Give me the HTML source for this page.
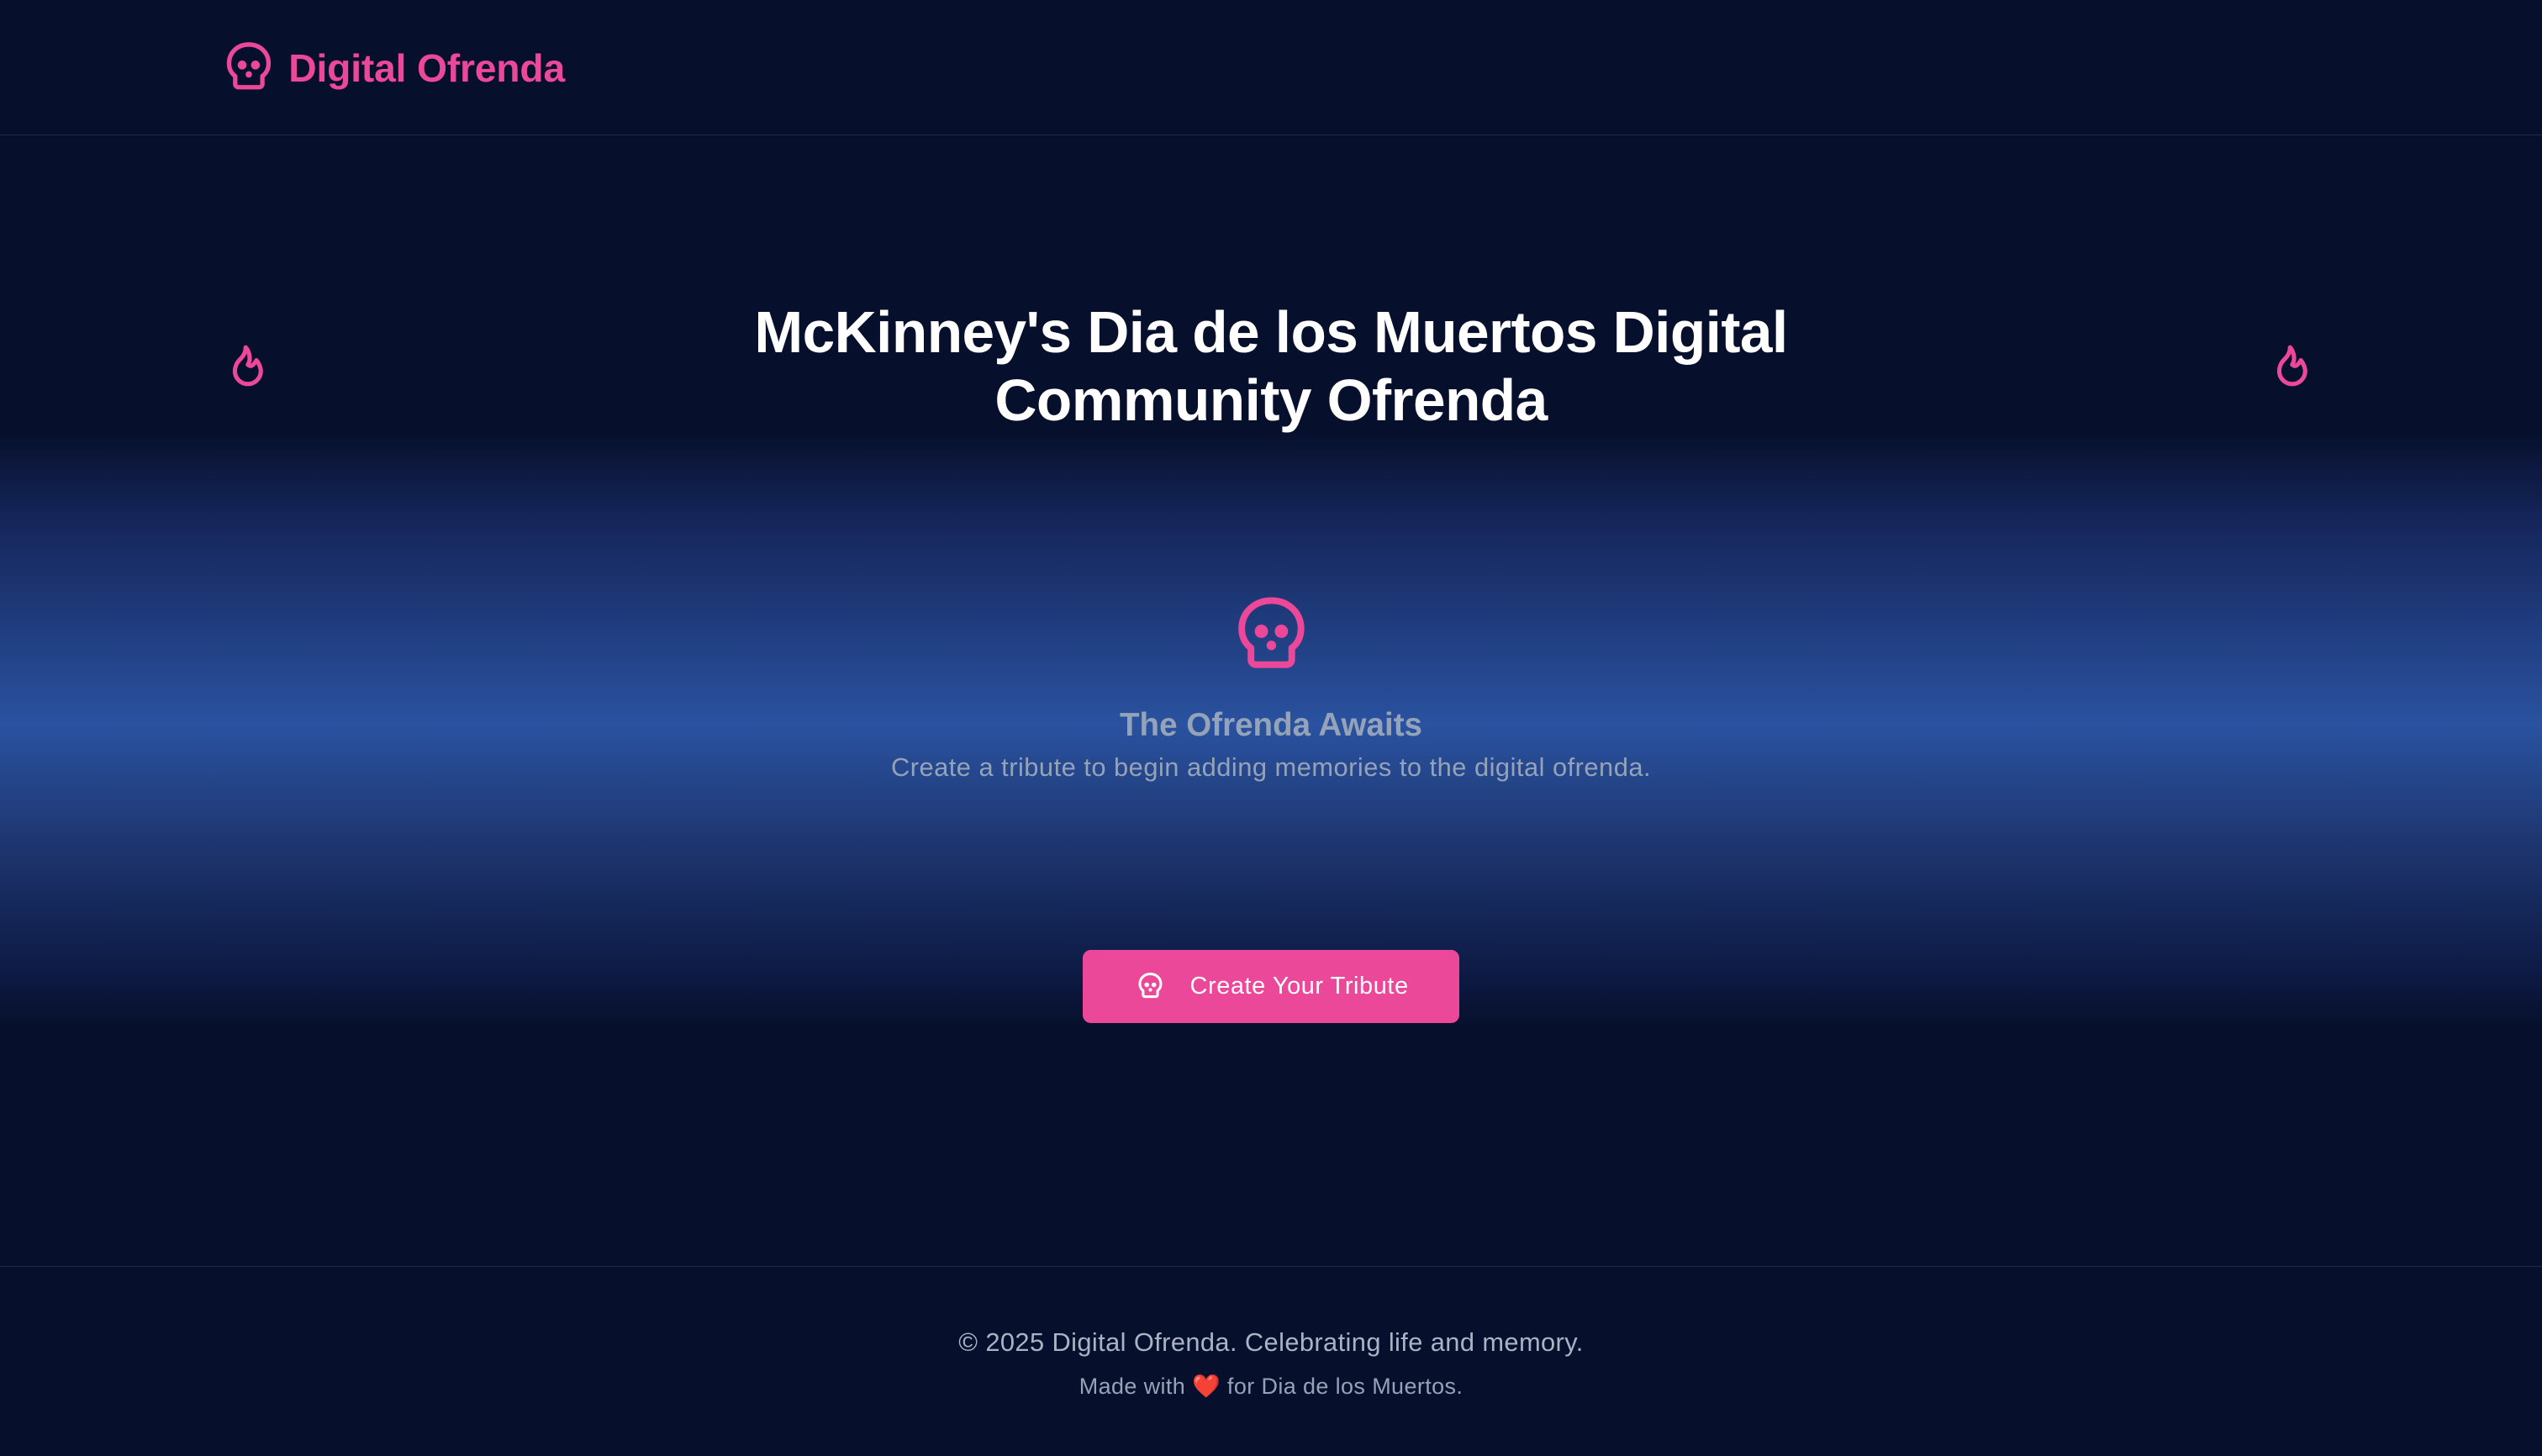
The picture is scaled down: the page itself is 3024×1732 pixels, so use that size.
<!DOCTYPE html>
<html><head><meta charset="utf-8"><style>
html,body{margin:0;padding:0;background:#060f2b;overflow:hidden}
#w{width:1568px;height:898px;zoom:1.92857;position:relative;font-family:"Liberation Sans",sans-serif;
background:linear-gradient(to bottom,#060f2b 0,#060f2b 265px,#15255a 320px,#2a52a0 447px,#1e3670 520px,#0d1a44 600px,#060f2b 635px,#060f2b 100%)}
.hdr{position:absolute;left:0;top:0;width:100%;height:83px;border-bottom:1px solid #1f2a44;background:#060f2b}
.logo{position:absolute;left:139px;top:26px;display:flex;align-items:center;color:#ec4899;font-weight:bold;font-size:24px}
.logo span{margin-left:10px;letter-spacing:-0.1px}
h1{position:absolute;left:0;width:100%;top:184px;margin:0;text-align:center;color:#fff;font-size:36px;line-height:42px;font-weight:bold;letter-spacing:-0.3px}
.fl{position:absolute;top:207px}
.big{position:absolute;left:762px;top:368px}
.t1{position:absolute;width:100%;top:436px;text-align:center;color:#94a3b8;font-size:20px;font-weight:bold}
.t2{position:absolute;width:100%;top:464px;text-align:center;color:#94a3b8;font-size:16px;letter-spacing:0.25px}
.btn{position:absolute;left:668px;top:586px;width:232px;height:45px;background:#ec4899;border-radius:5px;color:#fff;font-size:15px;display:flex;align-items:center}
.ftr{position:absolute;left:0;top:781px;width:100%;height:117px;border-top:1px solid #1f2a44;background:#060f2b}
.f1{position:absolute;width:100%;top:37px;text-align:center;color:#aab3c5;font-size:16px;letter-spacing:0.2px}
.f2{position:absolute;width:100%;top:65px;text-align:center;color:#94a3b8;font-size:14px;letter-spacing:0.2px}
</style></head><body><div id="w">
<div class="hdr"><div class="logo">
<svg width="29" height="32" viewBox="3 1.5 18 21" fill="none" stroke="#ec4899" stroke-width="1.8" stroke-linejoin="round"><path d="M12 2.5c4.6 0 8 3.3 8 7.6c0 2.3-1 4.1-2.5 5.2v3.2a1.3 1.3 0 0 1-1.3 1.3h-8.4a1.3 1.3 0 0 1-1.3-1.3v-3.2C5 14.2 4 12.4 4 10.1C4 5.8 7.4 2.5 12 2.5z"/><circle cx="9.3" cy="10.8" r="1.8" fill="#ec4899" stroke="none"/><circle cx="14.7" cy="10.8" r="1.8" fill="#ec4899" stroke="none"/><circle cx="12" cy="14.6" r="1.3" fill="#ec4899" stroke="none"/></svg>
<span>Digital Ofrenda</span></div></div>
<svg class="fl" style="left:137px" width="32" height="36" viewBox="0 0 24 24" fill="none" stroke="#ec4899" stroke-width="2" stroke-linejoin="round"><path d="M12 12c2 -2.96 0 -7 -1 -8c0 3.038 -1.773 4.741 -3 6c-1.226 1.26 -2 3.24 -2 5a6 6 0 1 0 12 0c0 -1.532 -1.056 -3.94 -2 -5c-1.786 3 -2.791 3 -4 2z"/></svg>
<svg class="fl" style="left:1398px" width="32" height="36" viewBox="0 0 24 24" fill="none" stroke="#ec4899" stroke-width="2" stroke-linejoin="round"><path d="M12 12c2 -2.96 0 -7 -1 -8c0 3.038 -1.773 4.741 -3 6c-1.226 1.26 -2 3.24 -2 5a6 6 0 1 0 12 0c0 -1.532 -1.056 -3.94 -2 -5c-1.786 3 -2.791 3 -4 2z"/></svg>
<h1>McKinney's Dia de los Muertos Digital<br>Community Ofrenda</h1>
<svg class="big" width="44" height="48" viewBox="3 1.5 18 21" fill="none" stroke="#ec4899" stroke-width="1.8" stroke-linejoin="round"><path d="M12 2.5c4.6 0 8 3.3 8 7.6c0 2.3-1 4.1-2.5 5.2v3.2a1.3 1.3 0 0 1-1.3 1.3h-8.4a1.3 1.3 0 0 1-1.3-1.3v-3.2C5 14.2 4 12.4 4 10.1C4 5.8 7.4 2.5 12 2.5z"/><circle cx="9.3" cy="10.8" r="1.8" fill="#ec4899" stroke="none"/><circle cx="14.7" cy="10.8" r="1.8" fill="#ec4899" stroke="none"/><circle cx="12" cy="14.6" r="1.3" fill="#ec4899" stroke="none"/></svg>
<div class="t1">The Ofrenda Awaits</div>
<div class="t2">Create a tribute to begin adding memories to the digital ofrenda.</div>
<div class="btn"><svg style="margin-left:34px" width="15" height="17" viewBox="3 1.5 18 21" fill="none" stroke="#fff" stroke-width="2" stroke-linejoin="round"><path d="M12 2.5c4.6 0 8 3.3 8 7.6c0 2.3-1 4.1-2.5 5.2v3.2a1.3 1.3 0 0 1-1.3 1.3h-8.4a1.3 1.3 0 0 1-1.3-1.3v-3.2C5 14.2 4 12.4 4 10.1C4 5.8 7.4 2.5 12 2.5z"/><circle cx="9.3" cy="10.8" r="1.8" fill="#fff" stroke="none"/><circle cx="14.7" cy="10.8" r="1.8" fill="#fff" stroke="none"/><circle cx="12" cy="14.6" r="1.3" fill="#fff" stroke="none"/></svg><span style="margin-left:17px;letter-spacing:0.3px">Create Your Tribute</span></div>
<div class="ftr"><div class="f1">© 2025 Digital Ofrenda. Celebrating life and memory.</div>
<div class="f2">Made with <span style="color:#e53935">❤️</span> for Dia de los Muertos.</div></div>
</div></body></html>
